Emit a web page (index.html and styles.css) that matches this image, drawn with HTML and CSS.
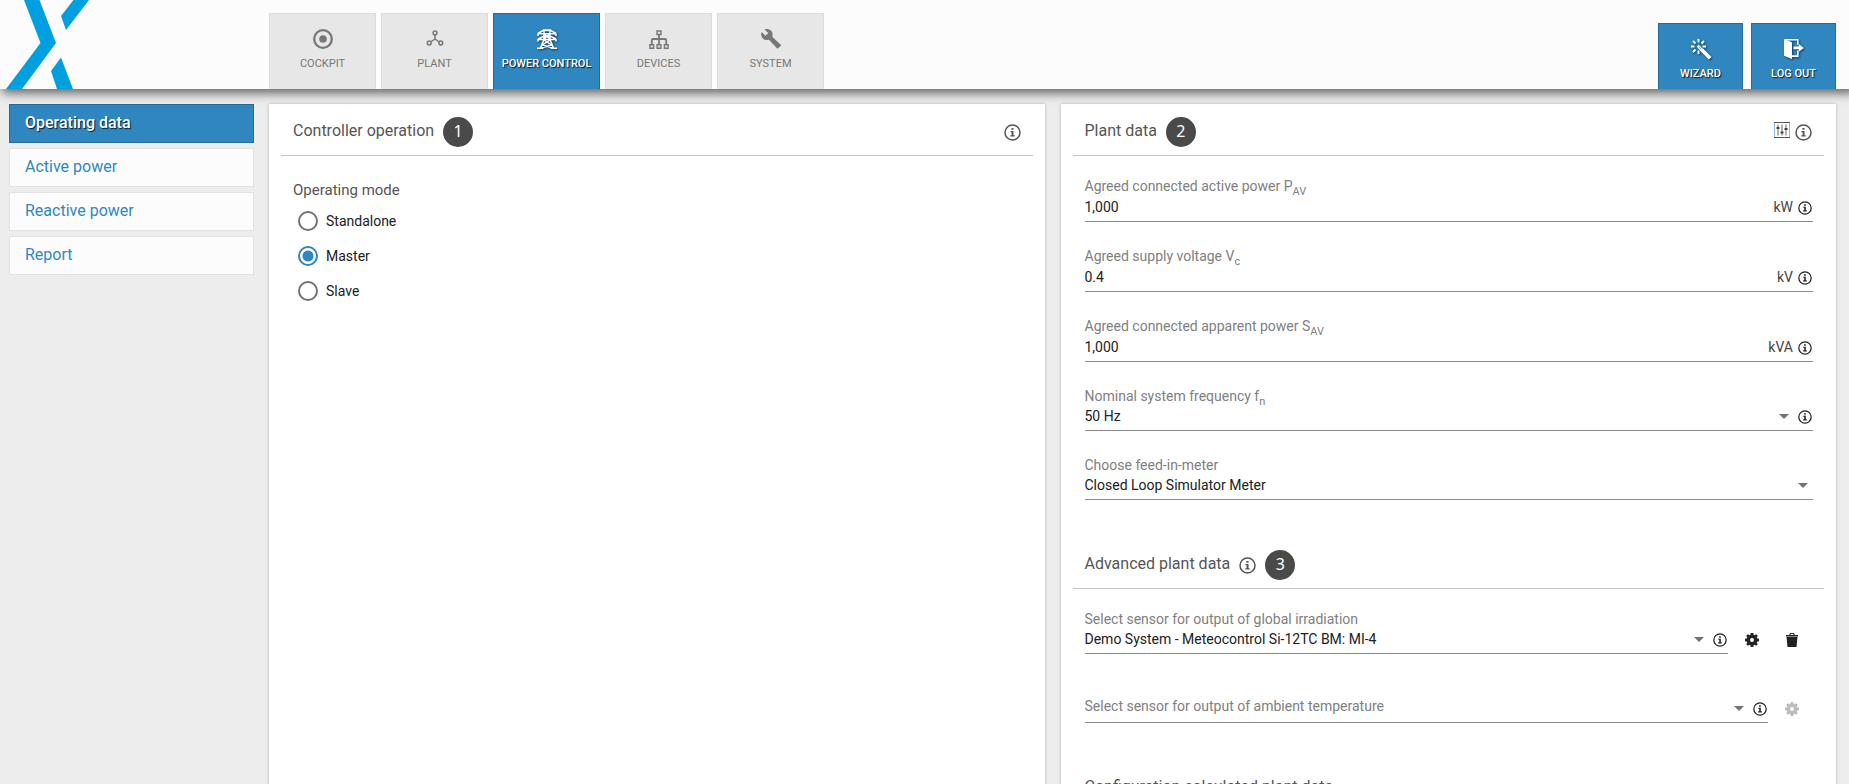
FILE: index.html
```html
<!DOCTYPE html>
<html lang="en">
<head>
<meta charset="utf-8">
<title>Power control</title>
<link rel="stylesheet" href="styles.css">
</head>
<body>
<svg class="sprite" aria-hidden="true">
  <symbol id="info" viewBox="0 0 17 17">
    <circle cx="8.5" cy="8.5" r="7.5" fill="none" stroke="currentColor" stroke-width="1.5"/>
    <path d="M7.4 3.9h2.1v1.8H7.4zM6.4 7h3.1v4.3h1.2v1.3H6.3v-1.3h1.3V8.3H6.4z" fill="currentColor"/>
  </symbol>
  <symbol id="arrow" viewBox="0 0 10 5"><path d="M0 0h10L5 5z" fill="currentColor"/></symbol>
  <symbol id="gear" viewBox="0 0 14 14">
    <path fill="currentColor" fill-rule="evenodd" d="M5.7 0h2.6l.4 2 .8.3L11.100 1.200l1.700 1.700-1.100 1.600.3.8 2 .4v2.600l-2 .4-.3.8 1.100 1.600-1.700 1.700-1.600-1.100-.8.3-.4 2H5.700l-.4-2-.8-.3-1.600 1.100-1.700-1.700 1.100-1.600-.3-.8-2-.4V5.700l2-.4.3-.8-1.100-1.600 1.700-1.700 1.600 1.100.8-.3zM7 5a2 2 0 1 0 0 4 2 2 0 0 0 0-4z"/>
  </symbol>
</svg>

<header class="topbar">
  <svg class="logo" viewBox="0 0 90 89" role="img" aria-label="Home">
    <path fill="#009fe0" d="M24 0h15.500L56 43 22 89H6L40.500 43zM73.500 0H89L66 30l-5-14zM61 57.500L73 89H57l-6-18z"/>
  </svg>
  <nav class="tabs">
    <a class="tab" href="#cockpit">
      <svg viewBox="0 0 20 20"><circle cx="10" cy="10" r="8.800" fill="none" stroke="currentColor" stroke-width="2.300"/><circle cx="10" cy="10" r="3.800" fill="currentColor"/></svg>
      <span>COCKPIT</span>
    </a>
    <a class="tab" href="#plant">
      <svg viewBox="0 0 20 20" fill="none" stroke="currentColor" stroke-width="1.500"><circle cx="10" cy="4" r="1.900"/><circle cx="4.200" cy="14" r="1.900"/><circle cx="15.800" cy="14" r="1.900"/><path d="M10 6v5M10 10l-4.300 3M10 10l4.300 3"/></svg>
      <span>PLANT</span>
    </a>
    <a class="tab active" href="#power" aria-current="page">
      <svg viewBox="0 0 20 20" fill="none" stroke="currentColor" stroke-width="1.500"><path d="M6 1h8M1 4.500L6 1.500h8l5 3M1 4.800h18M1 4.500v2.500M19 4.500v2.500M1 10l5-2.500h8l5 2.500M1 10.400h18M1 10v2.500M19 10v2.500M7 1v9.500L3.500 19M13 1v9.500l3.500 8.500M7 4.800l6 5.500M13 4.800l-6 5.500M7 11l7.500 5L4 19M13 11l-7.500 5L16 19M0 19.200h6.500M13.500 19.200H20"/></svg>
      <span>POWER CONTROL</span>
    </a>
    <a class="tab" href="#devices">
      <svg viewBox="0 0 20 20" fill="none" stroke="currentColor" stroke-width="1.400"><path d="M8 2h4v3.500H8zM.9 15.700h3.700v3.500H.9zM8.100 15.700h3.800v3.500H8.100zM15.400 15.700h3.700v3.500h-3.700z"/><path stroke-width="1.800" d="M10 5.500v10M2.800 15.500v-4.200q0-1.300 1.300-1.300h11.800q1.300 0 1.300 1.300v4.200"/></svg>
      <span>DEVICES</span>
    </a>
    <a class="tab" href="#system">
      <svg viewBox="1 2 21 21"><path fill="currentColor" d="M21.800 18.500l-9-8.400c.8-2.200.3-4.700-1.400-6.400C9.600 1.800 6.800 1.400 4.600 2.400l4 3.900-2.800 2.800-4-4C.6 7.400 1.100 10 2.900 11.900c1.700 1.700 4.200 2.200 6.400 1.400l8.500 8.900c.3.300.9.300 1.300 0l2.700-2.600c.4-.3.400-.9 0-1.100z"/></svg>
      <span>SYSTEM</span>
    </a>
  </nav>
  <div class="actions">
    <button class="action" type="button">
      <svg viewBox="0 0 20 20" fill="none" stroke="currentColor"><path stroke-width="1.900" d="M7.500 0v3.500M2 2l2.500 2.500M0 7.500h3.500M2 13l2.500-2.500M7.500 11.500V15M13 2l-2.500 2.500M11.500 7.500H15"/><path stroke-width="1.200" d="M6.600 7.700l1.100-1.100 3.500 3.700-1.200 1.200z"/><path stroke-width="3.700" d="M10.500 10.500l8.700 8.700"/></svg>
      <span>WIZARD</span>
    </button>
    <button class="action" type="button">
      <svg viewBox="0 0 20 20"><path fill="currentColor" d="M0 0l8 3.300V20l-8-3.300z"/><path fill="none" stroke="currentColor" stroke-width="1.600" d="M1 .8h12.800v5M13.800 11.500v5.600H8"/><path fill="currentColor" d="M9.500 7.500h5.300V5l5 3.900-5 3.900v-2.500H9.500z"/></svg>
      <span>LOG OUT</span>
    </button>
  </div>
</header>

<div class="page">
  <nav class="side">
    <a class="side-item active" href="#operating" aria-current="page">Operating data</a>
    <a class="side-item" href="#active">Active power</a>
    <a class="side-item" href="#reactive">Reactive power</a>
    <a class="side-item" href="#report">Report</a>
  </nav>

  <main class="cards">
    <section class="card">
      <div class="card-head">
        <h2>Controller operation</h2><span class="badge">1</span>
        <span class="tools"><svg class="info-lg" role="img" aria-label="Info"><use href="#info"/></svg></span>
      </div>
      <fieldset class="modes">
        <legend>Operating mode</legend>
        <label class="mode"><input type="radio" name="mode">Standalone</label>
        <label class="mode"><input type="radio" name="mode" checked>Master</label>
        <label class="mode"><input type="radio" name="mode">Slave</label>
      </fieldset>
    </section>

    <section class="card">
      <div class="card-head">
        <h2>Plant data</h2><span class="badge">2</span>
        <span class="tools">
          <svg class="mixer" viewBox="0 0 16 16" role="img" aria-label="Settings"><path fill="none" stroke="#8dbbe0" stroke-width="1" d="M.5 1v14M15.500 1v14"/><path fill="none" stroke="#555" d="M0 .5h16M0 15.500h16"/><path fill="none" stroke="#8b8580" stroke-width="1.300" d="M4 2.500v11M8 2.500v11M12 2.500v11"/><path fill="none" stroke="#444" stroke-width="2" d="M2.500 6h3M6.500 10.500h3M10.500 7h3"/></svg>
          <svg class="info-lg" role="img" aria-label="Info"><use href="#info"/></svg>
        </span>
      </div>
      <div class="fields">
        <div class="field">
          <label class="with-sub" for="pav">Agreed connected active power P<sub>AV</sub></label>
          <div class="control"><input id="pav" type="text" value="1,000"><span class="unit">kW</span><svg class="info" role="img" aria-label="Info"><use href="#info"/></svg></div>
        </div>
        <div class="field">
          <label class="with-sub" for="vc">Agreed supply voltage V<sub>c</sub></label>
          <div class="control"><input id="vc" type="text" value="0.4"><span class="unit">kV</span><svg class="info" role="img" aria-label="Info"><use href="#info"/></svg></div>
        </div>
        <div class="field">
          <label class="with-sub" for="sav">Agreed connected apparent power S<sub>AV</sub></label>
          <div class="control"><input id="sav" type="text" value="1,000"><span class="unit">kVA</span><svg class="info" role="img" aria-label="Info"><use href="#info"/></svg></div>
        </div>
        <div class="field">
          <label for="fn">Nominal system frequency f<sub>n</sub></label>
          <div class="control"><select id="fn"><option>50 Hz</option></select><svg class="arrow"><use href="#arrow"/></svg><svg class="info" role="img" aria-label="Info"><use href="#info"/></svg></div>
        </div>
        <div class="field">
          <label for="meter">Choose feed-in-meter</label>
          <div class="control"><select id="meter"><option>Closed Loop Simulator Meter</option></select><svg class="arrow"><use href="#arrow"/></svg></div>
        </div>
      </div>

      <div class="card-head sub-head">
        <h2>Advanced plant data</h2><svg class="info-lg" role="img" aria-label="Info"><use href="#info"/></svg><span class="badge">3</span>
      </div>
      <div class="fields">
        <div class="field-row">
          <div class="field">
            <label for="irr">Select sensor for output of global irradiation</label>
            <div class="control"><select id="irr"><option>Demo System - Meteocontrol Si-12TC BM: MI-4</option></select><svg class="arrow"><use href="#arrow"/></svg><svg class="info" role="img" aria-label="Info"><use href="#info"/></svg></div>
          </div>
          <button class="icon-btn" type="button" aria-label="Configure"><svg><use href="#gear"/></svg></button>
          <button class="icon-btn" type="button" aria-label="Delete"><svg viewBox="0 0 14 14"><path fill="currentColor" d="M1.500 4h11l-1 10h-9zM1 2h12v1.400H1z"/><path fill="none" stroke="currentColor" d="M5 2V.6h4V2"/></svg></button>
        </div>
        <div class="field-row">
          <div class="field floating">
            <label for="amb">Select sensor for output of ambient temperature</label>
            <div class="control"><select id="amb"><option></option></select><svg class="arrow"><use href="#arrow"/></svg><svg class="info" role="img" aria-label="Info"><use href="#info"/></svg></div>
          </div>
          <button class="icon-btn" type="button" aria-label="Configure" disabled><svg><use href="#gear"/></svg></button>
        </div>
      </div>

      <div class="card-head sub-head"><h2>Configuration calculated plant data</h2></div>
    </section>
  </main>
</div>
</body>
</html>
```
FILE: styles.css
```css
* { box-sizing: border-box; }
body {
  margin: 0;
  height: 100vh;
  display: flex;
  flex-direction: column;
  overflow: hidden;
  background: #ededed;
  color: #212121;
  font: 14px/20px Roboto, sans-serif;
}
.sprite { display: none; }
a { text-decoration: none; }
button, input, select { font: inherit; color: inherit; }

.topbar {
  position: relative;
  z-index: 1;
  flex: none;
  display: flex;
  align-items: flex-end;
  height: 89px;
  padding-right: 13px;
  background: #fcfcfc;
  box-shadow: 4px 2px 10px 2px rgba(0, 0, 0, .6);
}
.logo { width: 90px; height: 89px; margin-right: 179px; }
.tabs { display: flex; gap: 5px; }
.tab, .action {
  display: flex;
  flex-direction: column;
  align-items: center;
  border: 1px solid #dcdcdc;
  border-bottom: 0;
  font-size: 11px;
  line-height: 16px;
}
.tab {
  width: 107px;
  height: 76px;
  padding-top: 15px;
  gap: 7px;
  background: #e7e7e7;
  color: #777;
}
.tab svg, .action svg { width: 20px; height: 20px; overflow: visible; }
.tab.active, .action, .side-item.active {
  background: #3087c0;
  border-color: #256a98;
  color: #fff;
  font-weight: 500;
  text-shadow: 1px 1px 1px rgba(0, 0, 0, .8);
}
.tab.active svg, .action svg { filter: drop-shadow(1px 1px 1px rgba(0, 0, 0, .6)); }
.actions { display: flex; gap: 8px; margin-left: auto; }
.action { width: 85px; height: 66px; padding: 15px 0 0; gap: 7px; }

.page { flex: 1; min-height: 0; display: flex; gap: 15px; padding: 15px 13px 0 9px; }
.side { flex: none; width: 245px; display: flex; flex-direction: column; gap: 5px; }
.side-item {
  padding: 8px 15px 9px;
  border: 1px solid #e2e2e2;
  background: #fcfcfc;
  color: #3087c0;
  font-size: 16px;
}
.cards { flex: 1; display: grid; grid-template-columns: 1fr 1fr; gap: 16px; min-width: 0; }
.card { background: #fff; box-shadow: 0 0 3px rgba(0, 0, 0, .25); min-width: 0; }

.card-head {
  display: flex;
  align-items: center;
  height: 52px;
  margin: 0 12px;
  padding: 5px 12px 0;
  border-bottom: 1px solid #c4c4c4;
  color: #555;
}
.sub-head { margin-top: 37px; }
h2 { margin: 0; font-size: 16px; line-height: 20px; font-weight: 400; padding-bottom: 2px; }
.badge {
  width: 30px;
  height: 30px;
  margin-left: 9px;
  border-radius: 50%;
  background: #4a4a4a;
  color: #fff;
  font: 16px/29px "Noto Sans", sans-serif;
  text-align: center;
}
.tools { display: flex; align-items: center; gap: 5px; margin-left: auto; }
.info-lg { width: 17px; height: 17px; }
h2 + .info-lg { margin-left: 9px; }
.mixer { width: 16px; height: 16px; margin-bottom: 4px; }

.modes { margin: 0; padding: 24px 24px 0; border: 0; }
.modes legend { float: left; width: 100%; padding: 0; margin-bottom: 11px; font-size: 15px; color: #555; }
.mode { clear: both; display: flex; align-items: center; gap: 8px; margin: 0 0 15px 5px; }
.mode input {
  appearance: none;
  width: 20px;
  height: 20px;
  margin: 0;
  border: 2px solid #737373;
  border-radius: 50%;
}
.mode input:checked { border-color: #3087c0; background: radial-gradient(circle, #3087c0 5px, #fff 6px); }

.fields { display: grid; gap: 24px; padding: 20px 23px 0 24px; }
.field { display: flex; flex-direction: column; flex: 1; min-width: 0; }
.field label { height: 20px; color: #808080; }
.field .with-sub { height: 21px; }
sub { font-size: 11px; line-height: 0; }
.control { display: flex; align-items: flex-start; gap: 5px; height: 25px; padding-right: 1px; border-bottom: 1px solid #8c8c8c; }
.control input, .control select {
  appearance: none;
  flex: 1;
  min-width: 0;
  height: 20px;
  padding: 0;
  border: 0;
  background: none;
  outline: none;
}
.unit { color: #444; }
.info { width: 14px; height: 14px; margin-top: 4px; }
.arrow { width: 10px; height: 5px; margin: 8px 4px 0; color: #737373; }
.floating { display: grid; padding-top: 18px; }
.floating label, .floating .control { grid-area: 1 / 1; }
.floating .control { height: 27px; padding-top: 2px; }
.field-row { display: flex; align-items: flex-end; padding-right: 1px; }
.icon-btn { width: 14px; height: 14px; margin: 0 13px 7px; padding: 0; border: 0; background: none; }
.field + .icon-btn { margin-left: 17px; }
.icon-btn svg { display: block; width: 14px; height: 14px; }
.icon-btn:disabled { color: #bdbdbd; }
```
